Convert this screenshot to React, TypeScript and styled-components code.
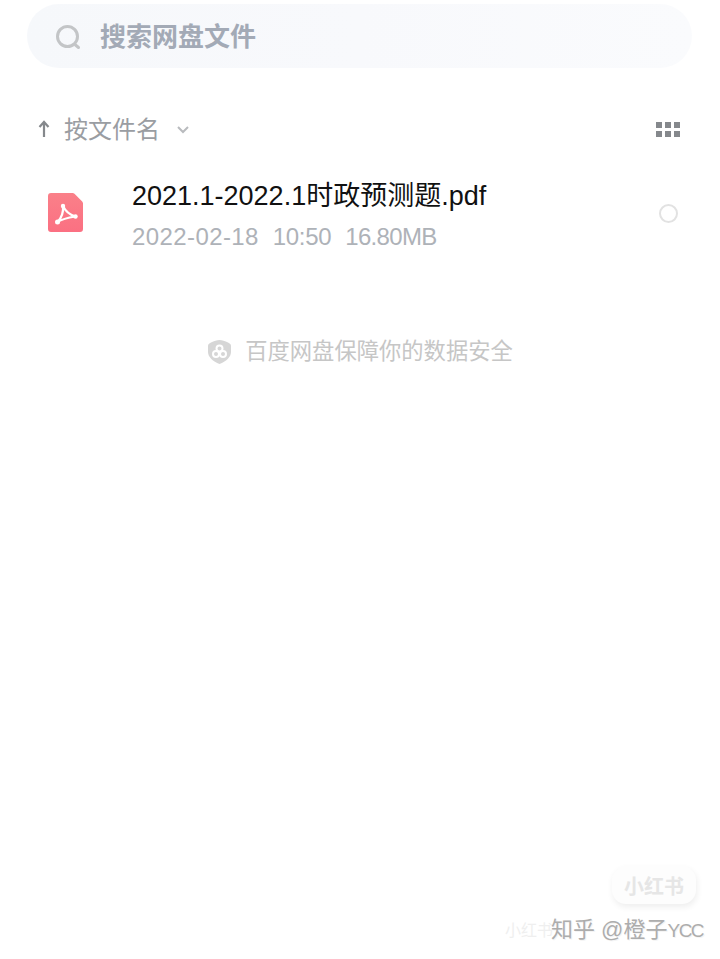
import React from "react";
import styled, { createGlobalStyle } from "styled-components";

const Global = createGlobalStyle`
  html, body {
    margin: 0;
    padding: 0;
    background: #fff;
  }
  body {
    font-family: "Liberation Sans", "Noto Sans CJK SC", sans-serif;
  }
`;

const Page = styled.div`
  position: relative;
  width: 720px;
  height: 959px;
  overflow: hidden;
  background: #fff;
  padding: 4px 28px 0 27px;
  box-sizing: border-box;
`;

const SearchBar = styled.div`
  height: 64px;
  border-radius: 32px;
  background: linear-gradient(90deg, #f6f8fb 0%, #f8f9fc 50%, #fafbfd 100%);
  display: flex;
  align-items: center;
  padding: 2px 0 0 28px;
  box-sizing: border-box;
  gap: 19px;
`;

const SearchText = styled.span`
  font-size: 26px;
  font-weight: 700;
  color: #a3aab6;
  line-height: 1;
`;

const SortRow = styled.div`
  display: flex;
  align-items: center;
  height: 50px;
  margin-top: 36px;
  padding: 0 12px 0 10px;
`;

const SortLabel = styled.span`
  font-size: 24px;
  color: #9a9da2;
  line-height: 1;
  margin-left: 13px;
  margin-top: 1px;
`;

const Chevron = styled.svg`
  margin-left: 17px;
  margin-top: 2px;
`;

const GridIcon = styled.div`
  margin-left: auto;
  display: grid;
  grid-template-columns: repeat(3, 6px);
  grid-auto-rows: 6px;
  gap: 3px;
`;

const GridDot = styled.i`
  display: block;
  background: #85888c;
`;

const FileRow = styled.div`
  display: flex;
  align-items: flex-start;
  margin-top: 27px;
  padding: 0 14px 0 21px;
`;

const PdfIcon = styled.svg`
  margin-top: 12px;
`;

const FileInfo = styled.div`
  flex: 1;
  margin-left: 49px;
  display: flex;
  flex-direction: column;
  gap: 12px;
`;

const FileName = styled.div`
  font-size: 27px;
  line-height: 30px;
  color: #111;
`;

const FileMeta = styled.div`
  display: flex;
  gap: 14px;
  font-size: 24px;
  line-height: 28px;
  color: #aeb2b8;
`;

const MetaPart = styled.span<{ $spacing: number }>`
  letter-spacing: ${(p) => p.$spacing}px;
`;

const Radio = styled.div`
  width: 15px;
  height: 15px;
  margin-top: 23px;
  border: 2.5px solid #e2e2e2;
  border-radius: 50%;
`;

const SafeNote = styled.div`
  display: flex;
  align-items: center;
  justify-content: center;
  gap: 14px;
  margin-top: 86px;
  padding-left: 2px;
`;

const SafeText = styled.span`
  font-size: 22.3px;
  line-height: 30px;
  color: #c6c6c6;
`;

const Badge = styled.div`
  position: absolute;
  left: 612px;
  top: 866px;
  width: 84px;
  height: 38px;
  border-radius: 14px;
  background: #fdfdfd;
  box-shadow: 1px 3px 6px rgba(0, 0, 0, 0.07);
  display: flex;
  align-items: center;
  justify-content: center;
  font-size: 20px;
  font-weight: 700;
  color: #e6e6e6;
`;

const Mark = styled.div`
  position: absolute;
  left: 505px;
  top: 917px;
  display: flex;
  align-items: center;
  font-size: 22px;
  line-height: 26px;
  white-space: pre;
`;

const FaintMark = styled.span`
  color: #efefef;
  width: 46px;
  font-size: 16px;
`;

const ZhihuMark = styled.span`
  color: #adadad;
  text-shadow: 1px 1px 0 #f4f4f4;
`;

const MarkLatin = styled.span`
  font-size: 19px;
  letter-spacing: -1.5px;
`;

const App = () => {
  return (
    <Page>
      <Global />
      <SearchBar>
        <svg width="26" height="26" viewBox="0 0 26 26" fill="none" stroke="#c3c5c7" strokeWidth="3" strokeLinecap="round">
          <circle cx="12.5" cy="12.5" r="10" />
          <path d="M20.5 21l3 2.5" />
        </svg>
        <SearchText>搜索网盘文件</SearchText>
      </SearchBar>

      <SortRow>
        <svg width="14" height="18" viewBox="0 0 14 18" fill="none" stroke="#85888c" strokeWidth="2.2">
          <path d="M7 17V2M2.5 7L7 2l4.5 5" />
        </svg>
        <SortLabel>按文件名</SortLabel>
        <Chevron width="12" height="8" viewBox="0 0 12 8" fill="none" stroke="#b9bbbe" strokeWidth="2">
          <path d="M1 1l5 5 5-5" />
        </Chevron>
        <GridIcon>
          {Array.from({ length: 6 }).map((_, i) => (
            <GridDot key={i} />
          ))}
        </GridIcon>
      </SortRow>

      <FileRow>
        <PdfIcon width="35" height="39" viewBox="0 0 35 39">
          <defs>
            <linearGradient id="pdf" x1="0" y1="0" x2="0" y2="1">
              <stop offset="0" stopColor="#fa8089" />
              <stop offset="1" stopColor="#fb7082" />
            </linearGradient>
          </defs>
          <path d="M3 0h21.500c.8 0 1.500.3 2 .8l7.700 7.700c.5.5.8 1.200.8 2V36a3 3 0 0 1-3 3H3a3 3 0 0 1-3-3V3a3 3 0 0 1 3-3z" fill="url(#pdf)" />
          <g fill="#fff">
            <circle cx="15" cy="13" r="2.200" />
            <circle cx="9.500" cy="29" r="2.500" />
            <circle cx="27.500" cy="23.500" r="2.200" />
          </g>
          <path
            d="M15 13C15.500 19 13.500 25 9.500 29C14 26 21 24.500 27.500 23.500C22.500 22 17.500 18.500 15 13z"
            fill="none"
            stroke="#fff"
            strokeWidth="2.200"
            strokeLinejoin="round"
          />
        </PdfIcon>
        <FileInfo>
          <FileName>2021.1-2022.1时政预测题.pdf</FileName>
          <FileMeta>
            <MetaPart $spacing={0.4}>2022-02-18</MetaPart>
            <MetaPart $spacing={-0.3}>10:50</MetaPart>
            <MetaPart $spacing={-0.7}>16.80MB</MetaPart>
          </FileMeta>
        </FileInfo>
        <Radio />
      </FileRow>

      <SafeNote>
        <svg width="23" height="24" viewBox="0 0 23 24">
          <path d="M3 2.500C6 1 9 0 11.500 0s5.500 1 8.500 2.500c1.800.9 3 1.800 3 3.500v6c0 5-5 9.500-11.500 12C5 21.500 0 17 0 12V6c0-1.700 1.200-2.600 3-3.500z" fill="#d6d6d6" />
          <g fill="none" stroke="#fff" strokeWidth="2">
            <circle cx="11.500" cy="8.500" r="3" />
            <circle cx="8" cy="14" r="3" />
            <circle cx="15" cy="14" r="3" />
          </g>
        </svg>
        <SafeText>百度网盘保障你的数据安全</SafeText>
      </SafeNote>

      <Badge>小红书</Badge>
      <Mark>
        <FaintMark>小红书</FaintMark>
        <ZhihuMark>
          知乎 @橙子<MarkLatin>YCC</MarkLatin>
        </ZhihuMark>
      </Mark>
    </Page>
  );
};

export default App;
